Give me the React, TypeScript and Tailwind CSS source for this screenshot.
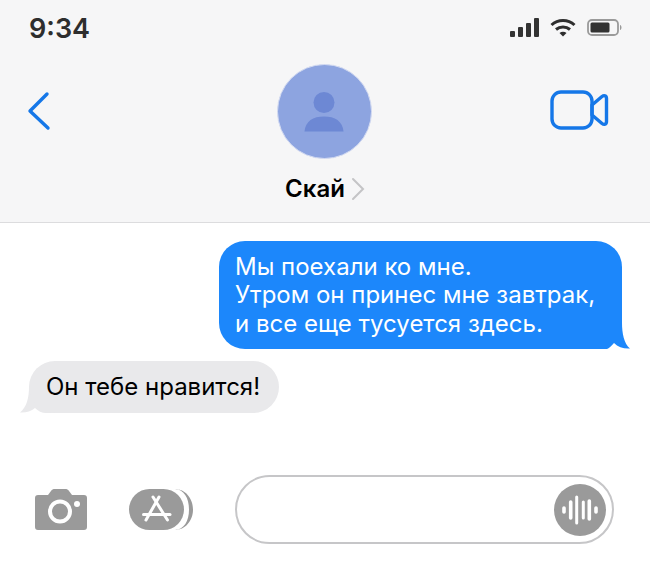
const FONT = "font-['Inter','Liberation_Sans',sans-serif]"

function SignalIcon() {
  return (
    <svg width="29" height="20" viewBox="0 0 29 20" fill="#333">
      <rect x="0" y="13" width="5" height="6" rx="1" />
      <rect x="8" y="9" width="5" height="10" rx="1" />
      <rect x="16" y="5" width="5" height="14" rx="1" />
      <rect x="24" y="0" width="5" height="19" rx="1" />
    </svg>
  )
}

function WifiIcon() {
  return (
    <svg width="26" height="20" viewBox="0 0 26 20" fill="none" stroke="#2e2e2e" strokeWidth="3">
      <path d="M1.5 7 C8 1 18 1 24.500 7" />
      <path d="M6 11.500 C10 8 16 8 20 11.500" />
      <path d="M13 18.500 L9.500 15 C11.500 13.300 14.500 13.300 16.500 15 Z" fill="#2e2e2e" stroke="none" />
    </svg>
  )
}

function BatteryIcon() {
  return (
    <svg width="36" height="18" viewBox="0 0 36 18">
      <rect x="1" y="1" width="30" height="15" rx="4" fill="none" stroke="#9a9a9a" strokeWidth="1.800" />
      <rect x="3.500" y="3.500" width="19" height="10" rx="1.500" fill="#333" />
      <path d="M33 6 C35 6.500 35 10.500 33 11 Z" fill="#9a9a9a" />
    </svg>
  )
}

function BackIcon() {
  return (
    <svg width="24" height="40" viewBox="0 0 24 40" fill="none" stroke="#1577e8" strokeWidth="3.400" strokeLinecap="round" strokeLinejoin="round">
      <path d="M20 3 L3 20 L21 37" />
    </svg>
  )
}

function VideoIcon() {
  return (
    <svg width="59" height="40" viewBox="0 0 59 40" fill="none" stroke="#1577e8" strokeWidth="3.400" strokeLinejoin="round">
      <rect x="2" y="2" width="40" height="36" rx="9" />
      <path d="M42 15 L52 6.500 C54 5 56.500 5.500 56.500 8.500 L56.500 31.500 C56.500 34.500 54 35 52 33.500 L42 25 Z" />
    </svg>
  )
}

function PersonIcon() {
  return (
    <svg width="40" height="40" viewBox="0 0 40 40" fill="#6d88d4">
      <circle cx="20" cy="10.500" r="10.500" />
      <path d="M0.500 39.500 C1.500 29 9 24.500 20 24.500 C31 24.500 38.500 29 39.500 39.500 Z" />
    </svg>
  )
}

function ChevronIcon() {
  return (
    <svg width="14" height="24" viewBox="0 0 14 24" fill="none" stroke="#c4c4c6" strokeWidth="2" strokeLinecap="round">
      <path d="M2 2 L12 12 L2 22" />
    </svg>
  )
}

function CameraIcon() {
  return (
    <svg width="52" height="41" viewBox="0 0 52 41">
      <path d="M3 6 H13 L16 2 C17 0.600 18 0 20 0 H30 C32 0 33 0.600 34 2 L37 6 H49 C51 6 52 7 52 9 V38 C52 40 51 41 49 41 H3 C1 41 0 40 0 38 V9 C0 7 1 6 3 6 Z" fill="#9a9a9a" />
      <circle cx="25" cy="22.500" r="10" fill="none" stroke="#fff" strokeWidth="4" />
      <circle cx="42" cy="15" r="3" fill="#fff" />
    </svg>
  )
}

function AppsIcon() {
  return (
    <svg width="64" height="41" viewBox="0 0 64 41">
      <path d="M46 0 C55 0.500 60 9 60 20.500 C60 32 55 40.500 46 41 C56 41 64 32 64 20.500 C64 9 56 0 46 0 Z" fill="#9a9a9a" />
      <rect x="0" y="0" width="55" height="41" rx="20.500" fill="#9a9a9a" />
      <g stroke="#fff" strokeWidth="3" strokeLinecap="round" fill="none">
        <path d="M24 8 L38.500 31" />
        <path d="M30 8 L17 31" />
        <path d="M14.500 25.500 H41" />
      </g>
    </svg>
  )
}

function VoiceIcon() {
  return (
    <svg width="36" height="30" viewBox="0 0 36 30" fill="none" stroke="#fff" strokeLinecap="round">
      <path d="M2 13 V17" strokeWidth="3.600" />
      <path d="M8.700 7 V23" strokeWidth="3.600" />
      <path d="M14.700 2 V28" strokeWidth="3" />
      <path d="M21.300 7 V23" strokeWidth="3" />
      <path d="M27.300 6 V24" strokeWidth="3.600" />
      <path d="M34 13 V17" strokeWidth="3.600" />
    </svg>
  )
}

export default function App() {
  return (
    <div className={`${FONT} h-[562px] w-[650px] overflow-hidden bg-white`}>
      <header className="h-[223px] border-b border-[#dcdcde] bg-[#f6f6f7]">
        <div className="flex h-[64px] items-start justify-between pl-[29px] pr-[27px] pt-[12px]">
          <span className="text-[27px] font-semibold leading-[34px] text-[#2e2e2e]">9:34</span>
          <div className="flex items-center gap-[11px] pt-[6px]">
            <SignalIcon />
            <WifiIcon />
            <BatteryIcon />
          </div>
        </div>
        <div className="grid grid-cols-[1fr_auto_1fr] items-start">
          <div className="pl-[27px] pt-[27px]">
            <BackIcon />
          </div>
          <div className="flex flex-col items-center pr-[2px]">
            <div className="flex h-[95px] w-[95px] items-center justify-center rounded-full border border-[#d5dcf2] bg-[#8da4e0]">
              <PersonIcon />
            </div>
            <div className="mt-[14px] flex items-center gap-[6px] pl-[2px] text-[24px] font-semibold leading-[32px] text-black">
              Скай
              <ChevronIcon />
            </div>
          </div>
          <div className="flex justify-end pr-[41px] pt-[26px]">
            <VideoIcon />
          </div>
        </div>
      </header>

      <main className="flex flex-col pt-[18px] text-[24px] leading-[28.500px]">
        <div className="relative mr-[28px] self-end">
          <div className="w-[403px] rounded-[26px] bg-[#1c87fb] px-[16px] pb-[11px] pt-[11.500px] text-white">
            <div>Мы поехали ко мне.</div>
            <div>Утром он принес мне завтрак,</div>
            <div>и все еще тусуется здесь.</div>
          </div>
          <svg className="absolute -right-[8px] bottom-0" width="34" height="26" viewBox="0 0 34 26" fill="#1c87fb">
            <path d="M0 26 H11 C13 25.500 15 23 18 20 C22 24 28 26 34 25.500 C28 21 26 10 26 0 H0 Z" />
          </svg>
        </div>

        <div className="relative ml-[29px] mt-[12px] self-start">
          <svg className="absolute -left-[9px] bottom-0" width="36" height="26" viewBox="0 0 36 26" fill="#e9e9eb">
            <path d="M9 0 C9 10 7 20 0 25.500 C5 26 11 24.500 15 21 C18 24 22 26 26 26 H36 V0 Z" />
          </svg>
          <div className="relative flex h-[52px] w-[250px] items-center rounded-[26px] bg-[#e9e9eb] pl-[17px] text-black">
            Он тебе нравится!
          </div>
        </div>

        <div className="mt-[62px] flex items-center pl-[35px]">
          <CameraIcon />
          <div className="ml-[42px]">
            <AppsIcon />
          </div>
          <div className="ml-[42px] flex h-[69px] w-[379px] items-center justify-end rounded-full border-2 border-[#c6c6c8] pr-[6px]">
            <div className="flex h-[52px] w-[52px] items-center justify-center rounded-full bg-[#9a9a9a]">
              <VoiceIcon />
            </div>
          </div>
        </div>
      </main>
    </div>
  )
}
